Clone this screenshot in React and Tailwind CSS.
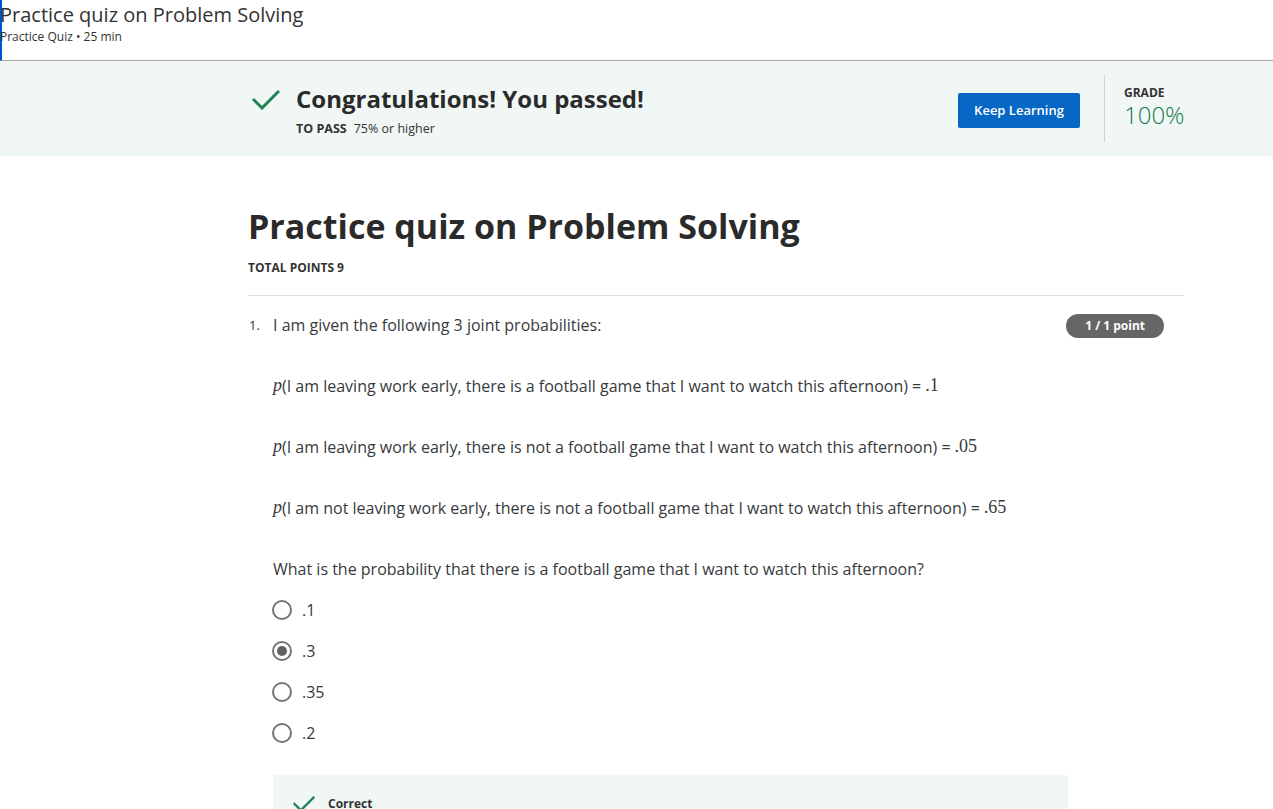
import React from "react";

const font = { fontFamily: '"Open Sans", "Noto Sans", sans-serif' };

const Check = ({ className }) => (
  <svg viewBox="0 0 28 20" className={className} fill="none">
    <path d="M2 10 L10 18 L26 2" stroke="#1f8354" strokeWidth="3" strokeLinecap="square" />
  </svg>
);

const Radio = ({ checked }) => (
  <span className="w-5 h-5 rounded-full border-2 border-[#757575] flex items-center justify-center shrink-0">
    {checked && <span className="w-[10px] h-[10px] rounded-full bg-[#616161]" />}
  </span>
);

const Prob = ({ text, value }) => (
  <p className="text-[16px] text-[#373a3c] h-[61px] flex items-center pl-[25px]">
    <span className="italic text-[18px]" style={{ fontFamily: '"Liberation Serif", serif' }}>p</span>
    <span>({text}) = </span>
    <span className="ml-1 text-[18px]" style={{ fontFamily: '"Liberation Serif", serif' }}>{value}</span>
  </p>
);

const options = [".1", ".3", ".35", ".2"];

export default function App() {
  return (
    <div className="min-h-screen bg-white text-[#1f1f1f]" style={font}>
      {/* Top header */}
      <div className="h-[61px] border-b border-[#a8a8a8] border-l-2 border-l-[#0056d2] pt-[2px]">
        <h1 className="text-[20px] leading-[26px] text-[#333] -ml-[2px]">Practice quiz on Problem Solving</h1>
        <p className="text-[12px] leading-[18px] text-[#333] -ml-[2px]">Practice Quiz • 25 min</p>
      </div>

      {/* Passed banner */}
      <div className="bg-[#f0f7f5] h-[95px]">
        <div className="ml-[248px] w-[936px] flex items-start h-full">
          <div className="flex items-start pt-[22px] flex-1">
            <Check className="w-[28px] h-[20px] mt-[7px] ml-[4px]" />
            <div className="ml-[16px]">
              <h2 className="text-[24px] font-bold leading-[32px] text-[#2a2a2a]">Congratulations! You passed!</h2>
              <p className="text-[12.5px] mt-[5px] text-[#333]">
                <span className="font-bold">TO PASS</span>
                <span className="ml-[7px]">75% or higher</span>
              </p>
            </div>
          </div>
          <button className="mt-[32px] w-[122px] h-[35px] bg-[#0767c5] rounded-[2px] text-white text-[13px] font-semibold">
            Keep Learning
          </button>
          <div className="ml-[24px] mt-[14px] h-[67px] border-l border-[#d4d4d4] pl-[19px] pt-[11px] w-[80px] flex flex-col gap-[1px]">
            <p className="text-[12px] font-bold leading-[14px] text-[#333]">GRADE</p>
            <p className="text-[24px] leading-[28px] font-light text-[#137a4a]">100%</p>
          </div>
        </div>
      </div>

      {/* Quiz body */}
      <div className="ml-[248px] w-[936px] pt-[47px]">
        <h2 className="text-[34px] font-bold leading-[46px] text-[#2a2a2a]">Practice quiz on Problem Solving</h2>
        <p className="text-[12px] font-bold leading-[16px] mt-[11px] text-[#333]">TOTAL POINTS 9</p>
        <div className="border-t border-[#dedede] mt-[19px]" />

        <div className="flex mt-[16px]">
          <span className="w-[25px] text-[13px] leading-[26px] pl-[1px] text-[#333]">1.</span>
          <div className="flex-1">
            <div className="flex items-start justify-between pr-[20px]">
              <p className="text-[16px] leading-[26px] text-[#373a3c]">I am given the following 3 joint probabilities:</p>
              <span className="mt-[2px] bg-[#666666] text-white text-[12px] font-bold rounded-full px-[19px] h-[24px] flex items-center">1 / 1 point</span>
            </div>
          </div>
        </div>

        <div className="mt-[17px]">
          <Prob text="I am leaving work early, there is a football game that I want to watch this afternoon" value=".1" />
          <Prob text="I am leaving work early, there is not a football game that I want to watch this afternoon" value=".05" />
          <Prob text="I am not leaving work early, there is not a football game that I want to watch this afternoon" value=".65" />
          <p className="text-[16px] text-[#373a3c] h-[61px] flex items-center pl-[25px]">
            What is the probability that there is a football game that I want to watch this afternoon?
          </p>
        </div>

        <div className="pl-[24px] -mt-[10px]">
          {options.map((o, i) => (
            <div key={o} className="h-[41px] flex items-center">
              <Radio checked={i === 1} />
              <span className="ml-[10px] text-[16px] text-[#373a3c]">{o}</span>
            </div>
          ))}
        </div>

        <div className="ml-[25px] w-[795px] bg-[#f0f7f5] mt-[22px] h-[60px] pt-[20px] pl-[20px] flex items-start">
          <Check className="w-[22px] h-[16px] mt-[1px]" />
          <span className="ml-[13px] text-[12px] font-bold text-[#333]">Correct</span>
        </div>
      </div>
    </div>
  );
}
